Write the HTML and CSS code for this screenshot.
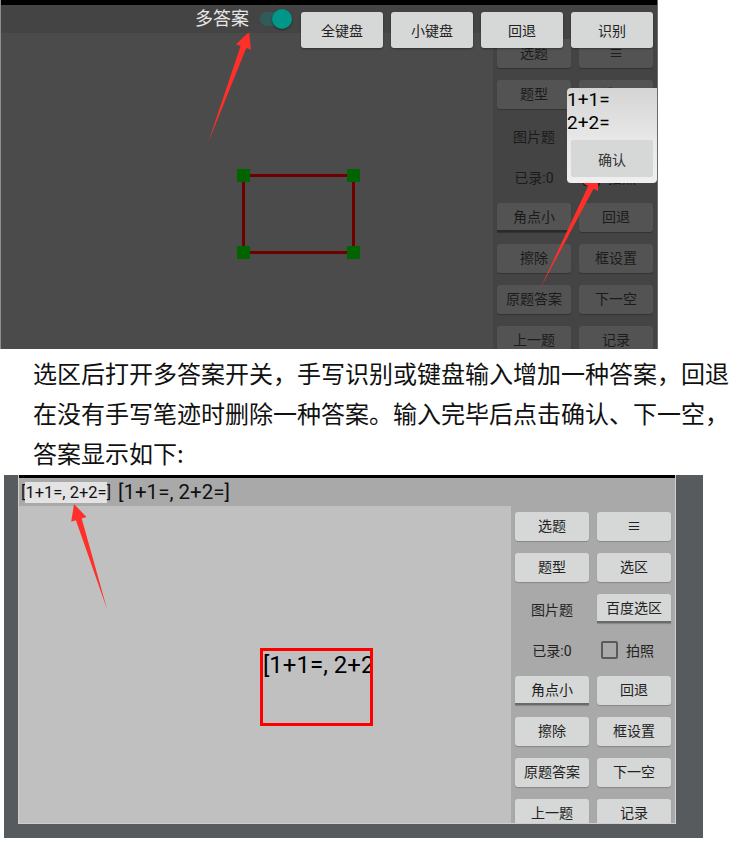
FILE: index.html
```html
<!DOCTYPE html>
<html lang="zh-CN">
<head>
<meta charset="utf-8">
<title>多答案</title>
<link rel="stylesheet" href="styles.css">
</head>
<body>
<section class="screen dim">
  <div class="statusbar"></div>
  <div class="topbar">
    <span class="multi-label">多答案</span>
    <span class="toggle"><span class="track"></span><span class="thumb"></span></span>
    <button class="kbtn">全键盘</button>
    <button class="kbtn">小键盘</button>
    <button class="kbtn">回退</button>
    <button class="kbtn">识别</button>
  </div>
  <div class="body">
    <div class="canvas">
      <div class="selbox">
        <span class="corner tl"></span><span class="corner tr"></span>
        <span class="corner bl"></span><span class="corner br"></span>
      </div>
    </div>
    <div class="panel">
      <button class="pbtn">选题</button>
      <button class="pbtn">≡</button>
      <button class="pbtn">题型</button>
      <button class="pbtn">选区</button>
      <span class="plabel">图片题</span>
      <button class="pbtn under">百度选区</button>
      <span class="plabel">已录:0</span>
      <span class="pcheck"><span class="box"></span>拍照</span>
      <button class="pbtn under">角点小</button>
      <button class="pbtn">回退</button>
      <button class="pbtn">擦除</button>
      <button class="pbtn">框设置</button>
      <button class="pbtn">原题答案</button>
      <button class="pbtn">下一空</button>
      <button class="pbtn">上一题</button>
      <button class="pbtn">记录</button>
    </div>
  </div>
  <div class="popup">
    <div class="popup-text">1+1=<br>2+2=</div>
    <button class="okbtn">确认</button>
  </div>
</section>

<p class="desc">选区后打开多答案开关，手写识别或键盘输入增加一种答案，回退在没有手写笔迹时删除一种答案。输入完毕后点击确认、下一空，答案显示如下:</p>

<div class="frame">
  <section class="screen lit">
    <div class="statusbar"></div>
    <div class="toolbar">
      <span class="ans-small">[<span class="hl">1+1=, 2+2=</span>]</span>
      <span class="ans-big">[1+1=, 2+2=]</span>
    </div>
    <div class="body">
      <div class="canvas">
        <div class="ansbox">[1+1=, 2+2=]</div>
      </div>
      <div class="panel">
        <button class="pbtn">选题</button>
        <button class="pbtn">≡</button>
        <button class="pbtn">题型</button>
        <button class="pbtn">选区</button>
        <span class="plabel">图片题</span>
        <button class="pbtn under">百度选区</button>
        <span class="plabel">已录:0</span>
        <span class="pcheck"><span class="box"></span>拍照</span>
        <button class="pbtn under">角点小</button>
        <button class="pbtn">回退</button>
        <button class="pbtn">擦除</button>
        <button class="pbtn">框设置</button>
        <button class="pbtn">原题答案</button>
        <button class="pbtn">下一空</button>
        <button class="pbtn">上一题</button>
        <button class="pbtn">记录</button>
      </div>
    </div>
  </section>
</div>

<svg class="arrows" width="748" height="858" viewBox="0 0 748 858" aria-hidden="true">
  <polygon points="208,143 246.3,48.1 251,49.8 249,32 235.9,44.2 240.6,46" />
  <polygon points="540,289 593.5,188.7 598,190.9 598,173 583.7,183.7 588.2,186" />
  <polygon points="107,609 81.7,518.4 86.4,516.9 74,504 71.2,521.7 75.9,520.2" />
</svg>
</body>
</html>
```

FILE: styles.css
```css
* { box-sizing: border-box; }

html, body {
  margin: 0;
  padding: 0;
  background: #ffffff;
}

body {
  width: 748px;
  height: 858px;
  overflow: hidden;
  position: relative;
  font-family: Roboto, "Noto Sans CJK SC", sans-serif;
}

button {
  font-family: inherit;
  border: none;
  padding: 0;
  margin: 0;
  cursor: default;
}

/* ---------- generic screen ---------- */
.screen {
  width: 658px;
  height: 349px;
  position: relative;
  display: flex;
  flex-direction: column;
  overflow: hidden;
}

.statusbar {
  flex: none;
  background: #000;
}

.body {
  flex: 1;
  min-height: 0;
  display: flex;
  overflow: hidden;
}

.canvas {
  flex: 1;
  position: relative;
}

.panel {
  flex: none;
  width: 164px;
  display: grid;
  grid-template-columns: 74px 74px;
  grid-auto-rows: 29px;
  column-gap: 8px;
  row-gap: 12px;
  padding: 6px 4px;
  align-content: start;
}

.pbtn {
  font-size: 14px;
  border-radius: 3px;
  line-height: 29px;
  text-align: center;
}

.pbtn.under {
  border-radius: 3px 3px 0 0;
}

.plabel {
  font-size: 14px;
  display: flex;
  align-items: center;
  justify-content: center;
}

.pcheck {
  font-size: 14px;
  display: flex;
  align-items: center;
  padding-left: 4px;
  gap: 8px;
}

.pcheck .box {
  width: 17px;
  height: 18px;
  border-radius: 2px;
  border: 2px solid;
}

/* ---------- dimmed (top) screen ---------- */
.dim {
  border-left: 1px solid #8e8e8e;
  border-right: 1px solid #6c6c6c;
}

.dim .statusbar { height: 5px; }

.topbar {
  flex: none;
  height: 28px;
  background: #444444;
  display: flex;
  align-items: flex-start;
  justify-content: flex-end;
  padding-right: 4px;
  position: relative;
  z-index: 3;
}

.multi-label {
  align-self: center;
  color: #e6e6e6;
  font-size: 18px;
  line-height: 28px;
  margin-right: 11px;
}

.toggle {
  align-self: center;
  position: relative;
  width: 33px;
  height: 20px;
}

.toggle .track {
  position: absolute;
  left: 0;
  top: 3px;
  width: 29px;
  height: 14px;
  border-radius: 7px;
  background: #2f5c59;
}

.toggle .thumb {
  position: absolute;
  left: 12px;
  top: 0;
  width: 20px;
  height: 20px;
  border-radius: 50%;
  background: #009688;
  box-shadow: 0 1px 2px rgba(0, 0, 0, 0.45);
}

.kbtn {
  width: 82px;
  height: 36px;
  margin-top: 7px;
  margin-left: 8px;
  background: #d6d7d7;
  color: #222;
  font-size: 14px;
  border-radius: 3px;
  box-shadow: 0 1px 2px rgba(0, 0, 0, 0.35);
}

.dim .canvas { background: #4b4b4b; }
.dim .panel { background: #444444; }

.dim .pbtn {
  background: #535353;
  color: #1b1b1b;
  box-shadow: 0 1px 1px rgba(0, 0, 0, 0.25);
}

.dim .pbtn.under { border-bottom: 2px solid #2a2a2a; }

.dim .plabel, .dim .pcheck { color: #1b1b1b; }
.dim .pcheck .box { border-color: #222; }

.selbox {
  position: absolute;
  left: 241px;
  top: 141px;
  width: 113px;
  height: 80px;
  border: 3px solid #6e0000;
}

.corner {
  position: absolute;
  width: 13px;
  height: 13px;
  background: #006400;
}
.corner.tl { left: -8px; top: -8px; }
.corner.tr { right: -8px; top: -8px; }
.corner.bl { left: -8px; bottom: -8px; }
.corner.br { right: -8px; bottom: -8px; }

.popup {
  position: absolute;
  top: 88px;
  right: 0;
  width: 90px;
  height: 95px;
  z-index: 4;
  background: linear-gradient(to bottom, #d4d4d4 0%, #e8e8e8 55%, #efefef 100%);
  border-radius: 4px 0 4px 4px;
  display: flex;
  flex-direction: column;
}

.popup-text {
  font-size: 19px;
  line-height: 23px;
  color: #000;
}

.okbtn {
  margin: 6px 4px 0;
  height: 37px;
  background: #d6d7d7;
  color: #333;
  font-size: 14px;
  border-radius: 2px;
}

/* ---------- description ---------- */
.desc {
  margin: 4px 0 0;
  padding-left: 33px;
  width: 735px;
  font-family: "Noto Sans CJK SC", sans-serif;
  font-size: 24px;
  line-height: 40px;
  color: #111;
}

/* ---------- lit (bottom) screen ---------- */
.frame {
  margin: 2px 0 0 4px;
  width: 699px;
  padding: 0 27px 14px 14px;
  background: #575b5e;
}

.lit {
  border-left: 1px solid #cfcfcf;
  border-right: 1px solid #cfcfcf;
  border-bottom: 1px solid #cfcfcf;
}

.lit .statusbar { height: 3px; }

.toolbar {
  flex: none;
  height: 28px;
  background: #a9a9a9;
  display: flex;
  align-items: center;
  padding-left: 2px;
  color: #111;
}

.ans-small {
  font-size: 16.5px;
}

.ans-small .hl {
  background: #e3e3e3;
  padding: 1px 0;
}

.ans-big {
  font-size: 20.5px;
  margin-left: 7px;
}

.lit .canvas { background: #c0c0c0; }
.lit .panel { background: #a9a9a9; }

.lit .pbtn {
  background: #d6d7d7;
  color: #222;
  box-shadow: 0 1px 1px rgba(0, 0, 0, 0.2);
}

.lit .pbtn.under { border-bottom: 2px solid #6a6a6a; }

.lit .plabel, .lit .pcheck { color: #222; }
.lit .pcheck .box { border-color: #5a5a5a; }

.ansbox {
  position: absolute;
  left: 241px;
  top: 142px;
  width: 113px;
  height: 78px;
  border: 3px solid #ff0000;
  font-size: 24px;
  line-height: 28px;
  color: #000;
  white-space: nowrap;
  overflow: hidden;
}

/* ---------- annotations ---------- */
.arrows {
  position: absolute;
  left: 0;
  top: 0;
  pointer-events: none;
}

.arrows polygon {
  fill: #ff2f2a;
}
```
